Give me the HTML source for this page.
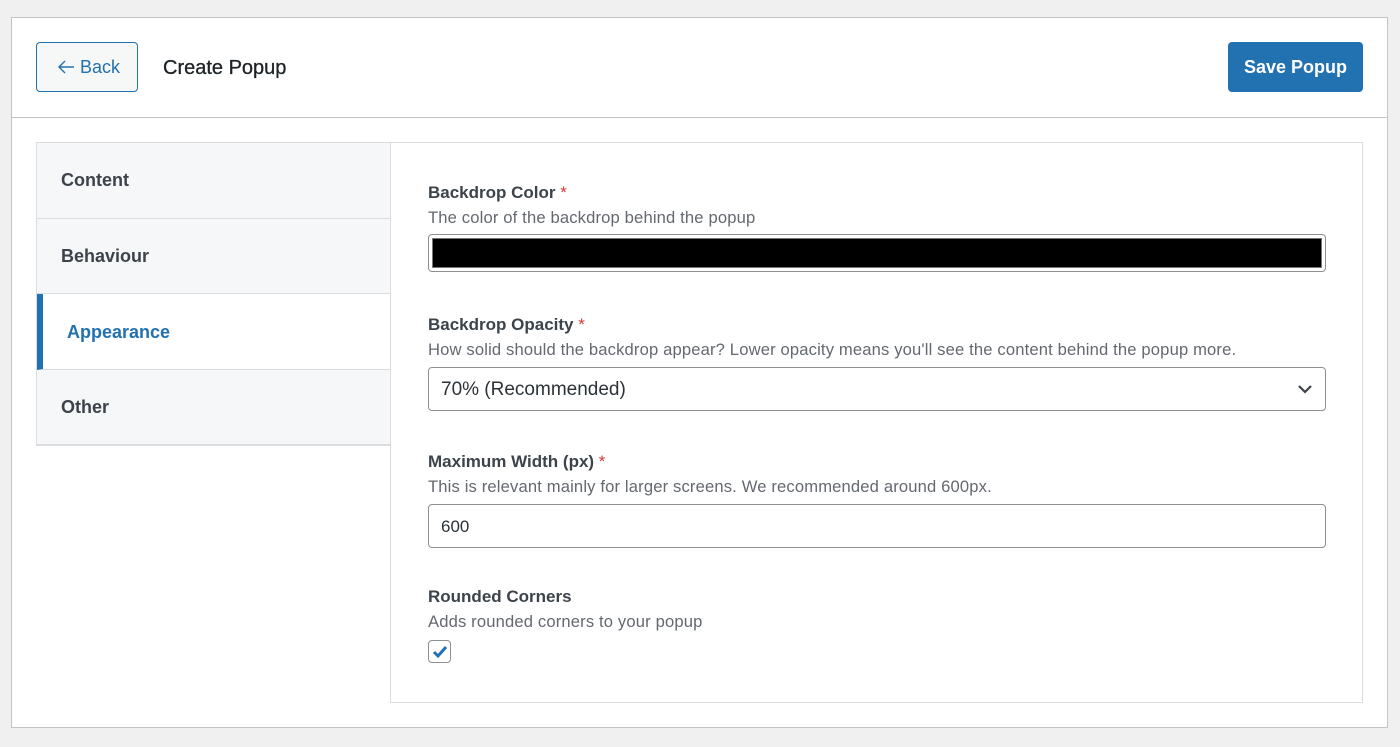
<!DOCTYPE html>
<html><head><meta charset="utf-8"><style>
*{box-sizing:border-box;margin:0;padding:0}
body{width:1400px;height:747px;background:#f0f0f1;font-family:"Liberation Sans",sans-serif;color:#1d2327;position:relative;overflow:hidden}
.card{position:absolute;left:11px;top:17px;width:1377px;height:711px;background:#fff;border:1px solid #c3c4c7}
.hdr{position:absolute;left:0;top:0;width:100%;height:100px;border-bottom:1px solid #c3c4c7}
.back{position:absolute;left:24px;top:24px;width:102px;height:50px;border:1px solid #2271b1;border-radius:4px;background:#f6f7f7;color:#2271b1;font-size:18px;line-height:48px;padding-left:20px}
.title{position:absolute;left:151px;top:39px;font-size:20px;color:#1d2327;-webkit-text-stroke:0.3px #1d2327}
.save{position:absolute;left:1216px;top:24px;width:135px;height:50px;background:#2271b1;border-radius:4px;color:#fff;font-size:18px;font-weight:bold;line-height:50px;text-align:center}
.side{position:absolute;left:24px;top:124px;width:355px;border:1px solid #dcdcde;border-right:none}
.tab{height:75.5px;background:#f6f7f9;border-bottom:1px solid #dcdcde;font-size:18px;font-weight:bold;color:#3c434a;padding:27px 24px}
.tab.act{background:#fff;color:#2271b1;border-left:6px solid #2271b1;padding-left:24px;padding-top:28px}
.panel{position:absolute;left:378px;top:124px;width:973px;height:561px;border:1px solid #dcdcde}
.f{position:absolute;left:37px;width:898px}
.lbl{font-size:17px;font-weight:bold;color:#3c434a}
.lbl span{color:#d63638;font-weight:normal}
.d{font-size:16.6px;color:#646970;margin-top:5px;letter-spacing:0.15px}
.inp{margin-top:7px;height:44px;border:1px solid #8c8f94;border-radius:4px;font-size:19px;padding:11px 12px;color:#2c3338;position:relative}
</style></head><body>
<div class="card">
 <div class="hdr">
  <div class="back"><svg width="18" height="14" viewBox="0 0 18 14" style="vertical-align:-1px"><path d="M17 7H2M8 1L2 7l6 6" fill="none" stroke="#2271b1" stroke-width="1.4"/></svg> Back</div>
  <div class="title">Create Popup</div>
  <div class="save">Save Popup</div>
 </div>
 <div class="side">
  <div class="tab">Content</div>
  <div class="tab">Behaviour</div>
  <div class="tab act">Appearance</div>
  <div class="tab">Other</div>
 </div>
 <div class="panel">
  <div class="f" style="top:40px">
   <div class="lbl">Backdrop Color <span>*</span></div>
   <div class="d">The color of the backdrop behind the popup</div>
   <div style="margin-top:6px;height:38px;border:1px solid #8c8f94;border-radius:4px;padding:3px;background:#fff"><div style="height:100%;background:#000;border:1px solid #777"></div></div>
  </div>
  <div class="f" style="top:172px">
   <div class="lbl">Backdrop Opacity <span>*</span></div>
   <div class="d">How solid should the backdrop appear? Lower opacity means you'll see the content behind the popup more.</div>
   <div class="inp">70% (Recommended)<svg style="position:absolute;right:12px;top:15px" width="16" height="12" viewBox="0 0 16 12"><path d="M2 3l6 6 6-6" fill="none" stroke="#3c434a" stroke-width="2.2"/></svg></div>
  </div>
  <div class="f" style="top:309px">
   <div class="lbl">Maximum Width (px) <span>*</span></div>
   <div class="d">This is relevant mainly for larger screens. We recommended around 600px.</div>
   <div class="inp" style="font-size:17px;padding-top:12px">600</div>
  </div>
  <div class="f" style="top:444px">
   <div class="lbl">Rounded Corners</div>
   <div class="d">Adds rounded corners to your popup</div>
   <div style="margin-top:8px;width:23px;height:23px;border:1px solid #8c8f94;border-radius:4px;position:relative"><svg style="position:absolute;left:2px;top:2px" width="18" height="18" viewBox="0 0 18 18"><path d="M3 9l4 4 8-9" fill="none" stroke="#2271b1" stroke-width="3"/></svg></div>
  </div>
 </div>
</div>
</body></html>
